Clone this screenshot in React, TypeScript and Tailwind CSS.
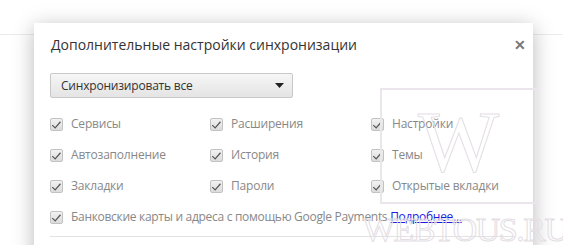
const font = "font-['Open_Sans','Noto_Sans',sans-serif]"

function Box() {
  return (
    <span className="flex h-[13px] w-[13px] shrink-0 items-center justify-center rounded-[2px] border border-[#c2c2c2] bg-gradient-to-b from-[#f2f2f2] to-[#dcdcdc]">
      <svg viewBox="0 0 12 12" className="h-[11px] w-[11px]">
        <path d="M1.8 6.2 L4.5 8.7 L9.8 2.4 L10.9 3.5 L4.6 10.7 L0.9 7.2 Z" fill="#595959" />
      </svg>
    </span>
  )
}

function CheckItem({ label }: { label: string }) {
  return (
    <label className="flex items-center gap-[8px] text-[12px] tracking-[-0.2px] text-[#888]">
      <Box />
      <span>{label}</span>
    </label>
  )
}

export default function App() {
  return (
    <div className={`relative h-[245px] w-[563px] overflow-hidden bg-white ${font}`}>
      <div className="mt-[34px] h-px w-full bg-[#ececec]" />

      <div className="absolute left-[34px] top-[23px] h-[260px] w-[499px] bg-white shadow-[0_4px_20px_rgba(0,0,0,0.28)]">
        <div className="flex items-center justify-between pl-[17px] pr-[7px] pt-[11px]">
          <h1 className="text-[14px] text-[#333]">Дополнительные настройки синхронизации</h1>
          <span className="text-[14px] font-bold leading-none text-[#777]">✕</span>
        </div>

        <div className="px-[16px] pt-[18px]">
          <div className="flex h-[25px] w-[243px] items-center justify-between rounded-[2px] border border-[#c8c8c8] bg-gradient-to-b from-[#f6f6f6] to-[#e4e4e4] pl-[10px] pr-[8px] text-[12px] tracking-[-0.2px] text-[#333]">
            <span>Синхронизировать все</span>
            <svg viewBox="0 0 9 5" className="h-[5px] w-[9px]">
              <path d="M0 0 H9 L4.5 5 Z" fill="#222" />
            </svg>
          </div>

          <div className="mt-[17px] grid grid-cols-[160px_161px_1fr] gap-y-[13px]">
            <CheckItem label="Сервисы" />
            <CheckItem label="Расширения" />
            <CheckItem label="Настройки" />
            <CheckItem label="Автозаполнение" />
            <CheckItem label="История" />
            <CheckItem label="Темы" />
            <CheckItem label="Закладки" />
            <CheckItem label="Пароли" />
            <CheckItem label="Открытые вкладки" />
          </div>

          <div className="mt-[13px] flex items-center gap-[8px] text-[12px] tracking-[-0.3px] text-[#888]">
            <Box />
            <span>
              Банковские карты и адреса с помощью Google Payments{" "}
              <a href="#" className="text-[#1a1ae0] underline">Подробнее...</a>
            </span>
          </div>

          <div className="mr-[2px] mt-[10px] h-px bg-[#e2e2e2]" />
        </div>
      </div>

      <div className="pointer-events-none absolute left-[380px] top-[88px] flex h-[116px] w-[157px] items-center justify-center border-2 border-[#ebe6eb] pb-[8px]">
        <span className="font-['Liberation_Serif',serif] text-[86px] leading-none text-transparent [-webkit-text-stroke:1px_#e4dee4]">W</span>
      </div>
      <div className="pointer-events-none absolute left-[363px] top-[213px] font-['Liberation_Serif',serif] text-[34px] leading-none tracking-[-1.5px] text-transparent [-webkit-text-stroke:1px_#e4dee4]">
        WEBTOUS.RU
      </div>
    </div>
  )
}
